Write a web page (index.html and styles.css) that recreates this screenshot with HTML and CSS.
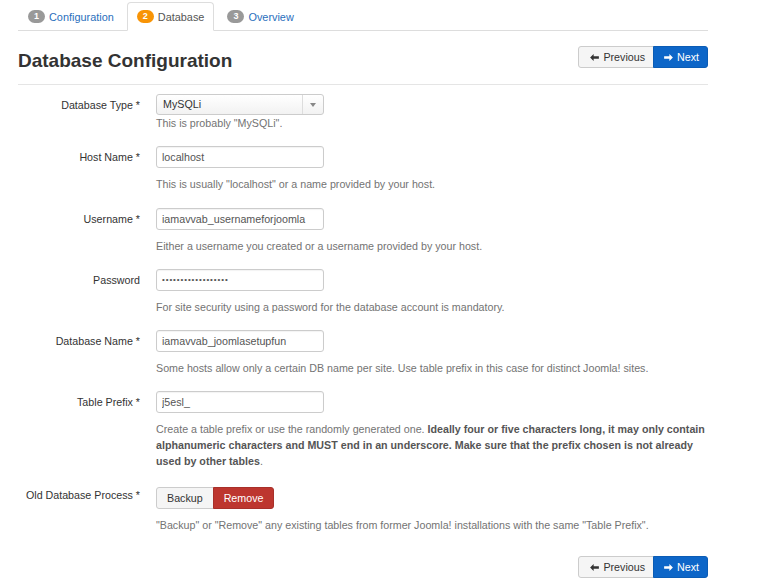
FILE: index.html
```html
<!DOCTYPE html>
<html lang="en">
<head>
    <meta charset="UTF-8">
    <meta name="viewport" content="width=device-width, initial-scale=1.0">
    <title>Joomla Installation - Database</title>
    <link rel="stylesheet" href="styles.css">
</head>
<body>
    <div class="page">
        <!-- Install steps -->
        <ul class="steps">
            <li class="step"><span class="badge">1</span><a href="#">Configuration</a></li>
            <li class="step active"><span class="badge badge-warning">2</span><span>Database</span></li>
            <li class="step"><span class="badge">3</span><a href="#">Overview</a></li>
        </ul>

        <div class="page-header">
            <h2>Database Configuration</h2>
            <div class="btn-group">
                <button class="btn"><svg class="icon" viewBox="0 0 10 8"><path d="M0 4 L4 0 L4 2.6 L10 2.6 L10 5.4 L4 5.4 L4 8 Z"/></svg>Previous</button>
                <button class="btn btn-primary"><svg class="icon" viewBox="0 0 10 8"><path d="M10 4 L6 0 L6 2.6 L0 2.6 L0 5.4 L6 5.4 L6 8 Z"/></svg>Next</button>
            </div>
        </div>

        <form class="form-horizontal">
            <div class="control-group">
                <label class="control-label">Database Type *</label>
                <div class="controls">
                    <div class="select">
                        <span class="select-value">MySQLi</span>
                        <span class="select-arrow"><span class="caret"></span></span>
                    </div>
                    <p class="help first">This is probably "MySQLi".</p>
                </div>
            </div>

            <div class="control-group">
                <label class="control-label">Host Name *</label>
                <div class="controls">
                    <input type="text" class="input" value="localhost">
                    <p class="help">This is usually "localhost" or a name provided by your host.</p>
                </div>
            </div>

            <div class="control-group">
                <label class="control-label">Username *</label>
                <div class="controls">
                    <input type="text" class="input" value="iamavvab_usernameforjoomla">
                    <p class="help">Either a username you created or a username provided by your host.</p>
                </div>
            </div>

            <div class="control-group">
                <label class="control-label">Password</label>
                <div class="controls">
                    <input type="password" class="input input-password" value="secretpassword1234">
                    <p class="help">For site security using a password for the database account is mandatory.</p>
                </div>
            </div>

            <div class="control-group">
                <label class="control-label">Database Name *</label>
                <div class="controls">
                    <input type="text" class="input" value="iamavvab_joomlasetupfun">
                    <p class="help">Some hosts allow only a certain DB name per site. Use table prefix in this case for distinct Joomla! sites.</p>
                </div>
            </div>

            <div class="control-group wide">
                <label class="control-label">Table Prefix *</label>
                <div class="controls">
                    <input type="text" class="input" value="j5esl_">
                    <p class="help">Create a table prefix or use the randomly generated one. <strong>Ideally four or five characters long, it may only contain alphanumeric characters and MUST end in an underscore. Make sure that the prefix chosen is not already used by other tables</strong>.</p>
                </div>
            </div>

            <div class="control-group">
                <label class="control-label label-top">Old Database Process *</label>
                <div class="controls">
                    <div class="btn-group">
                        <button type="button" class="btn">Backup</button>
                        <button type="button" class="btn btn-danger">Remove</button>
                    </div>
                    <p class="help">"Backup" or "Remove" any existing tables from former Joomla! installations with the same "Table Prefix".</p>
                </div>
            </div>
        </form>

        <div class="form-actions">
            <div class="btn-group">
                <button class="btn"><svg class="icon" viewBox="0 0 10 8"><path d="M0 4 L4 0 L4 2.6 L10 2.6 L10 5.4 L4 5.4 L4 8 Z"/></svg>Previous</button>
                <button class="btn btn-primary"><svg class="icon" viewBox="0 0 10 8"><path d="M10 4 L6 0 L6 2.6 L0 2.6 L0 5.4 L6 5.4 L6 8 Z"/></svg>Next</button>
            </div>
        </div>
    </div>
</body>
</html>
```

FILE: styles.css
```css
body {
    margin: 0;
    padding: 0;
    background-color: #fff;
    color: #333;
    font-family: "Liberation Sans", Arial, sans-serif;
    font-size: 10.7px;
}
.page {
    width: 690px;
    margin-left: 18px;
}
/* Steps tabs */
.steps {
    display: flex;
    list-style: none;
    margin: 0;
    padding: 2px 0 0;
    border-bottom: 1px solid #ddd;
    font-size: 10.9px;
}
.step {
    display: flex;
    align-items: center;
    gap: 4px;
    height: 27px;
    padding: 0 9px;
    margin-right: 3px;
    margin-bottom: -1px;
    border: 1px solid transparent;
    border-radius: 4px 4px 0 0;
}
.step a {
    color: #2a6fbd;
    text-decoration: none;
}
.step.active {
    border-color: #ddd;
    border-bottom-color: #fff;
    background-color: #fff;
    color: #555;
}
.badge {
    display: inline-block;
    min-width: 17px;
    height: 13px;
    line-height: 13px;
    border-radius: 7px;
    background-color: #999;
    color: #fff;
    font-size: 9px;
    font-weight: bold;
    text-align: center;
}
.badge-warning {
    background-color: #f89406;
}
/* Header */
.page-header {
    display: flex;
    justify-content: space-between;
    align-items: flex-start;
    padding: 15px 0 12px;
    border-bottom: 1px solid #e5e5e5;
}
.page-header h2 {
    margin: 4px 0 0;
    font-size: 19px;
    line-height: 22px;
    color: #333;
}
/* Buttons */
.btn-group {
    display: flex;
}
.btn {
    display: inline-flex;
    align-items: center;
    gap: 4px;
    height: 22px;
    padding: 0 10px;
    border: 1px solid #ccc;
    background-color: #f5f5f5;
    color: #333;
    font-family: inherit;
    font-size: 10.7px;
    cursor: pointer;
}
.btn-group .btn:first-child {
    border-radius: 3px 0 0 3px;
}
.btn-group .btn:last-child {
    border-radius: 0 3px 3px 0;
    margin-left: -1px;
}
.btn-primary {
    background-color: #0d66c8;
    border-color: #0b5cb5;
    color: #fff;
}
.btn-danger {
    background-color: #bd362f;
    border-color: #a8302a;
    color: #fff;
}
.icon {
    width: 9px;
    height: 7px;
    fill: currentColor;
}
.page-header .btn:first-child,
.form-actions .btn:first-child {
    padding: 0 8px 0 11px;
}
.page-header .btn-primary,
.form-actions .btn-primary {
    padding: 0 8px 0 10px;
}
/* Form */
.form-horizontal {
    margin-top: 9px;
}
.control-group {
    display: grid;
    grid-template-columns: 122px 1fr;
    column-gap: 16px;
    margin-bottom: 15.3px;
}
.control-group.wide {
    margin-bottom: 18px;
}
.control-label {
    text-align: right;
    line-height: 22px;
    color: #333;
}
.label-top {
    line-height: 16px;
}
.input {
    display: block;
    box-sizing: border-box;
    width: 168px;
    height: 22px;
    padding: 0 5px;
    border: 1px solid #ccc;
    border-radius: 3px;
    box-shadow: inset 0 1px 1px rgba(0, 0, 0, 0.05);
    color: #555;
    font-family: inherit;
    font-size: 10.7px;
}
.input-password {
    letter-spacing: 0.9px;
    font-size: 8px;
}
.select {
    display: flex;
    box-sizing: border-box;
    width: 168px;
    height: 21px;
    border: 1px solid #ccc;
    border-radius: 3px;
    background: linear-gradient(#fff, #f2f2f2);
}
.select-value {
    flex: 1;
    padding-left: 6px;
    line-height: 19px;
    color: #333;
}
.select-arrow {
    display: flex;
    align-items: center;
    justify-content: center;
    width: 20px;
    border-left: 1px solid #ddd;
}
.caret {
    width: 0;
    height: 0;
    border-left: 3px solid transparent;
    border-right: 3px solid transparent;
    border-top: 4px solid #888;
}
.help {
    margin: 8px 0 0;
    line-height: 16px;
    color: #737373;
}
.help.first {
    margin-top: 0;
}
.help strong {
    color: #555;
}
.form-actions {
    display: flex;
    justify-content: flex-end;
    margin-top: 23px;
}
```
